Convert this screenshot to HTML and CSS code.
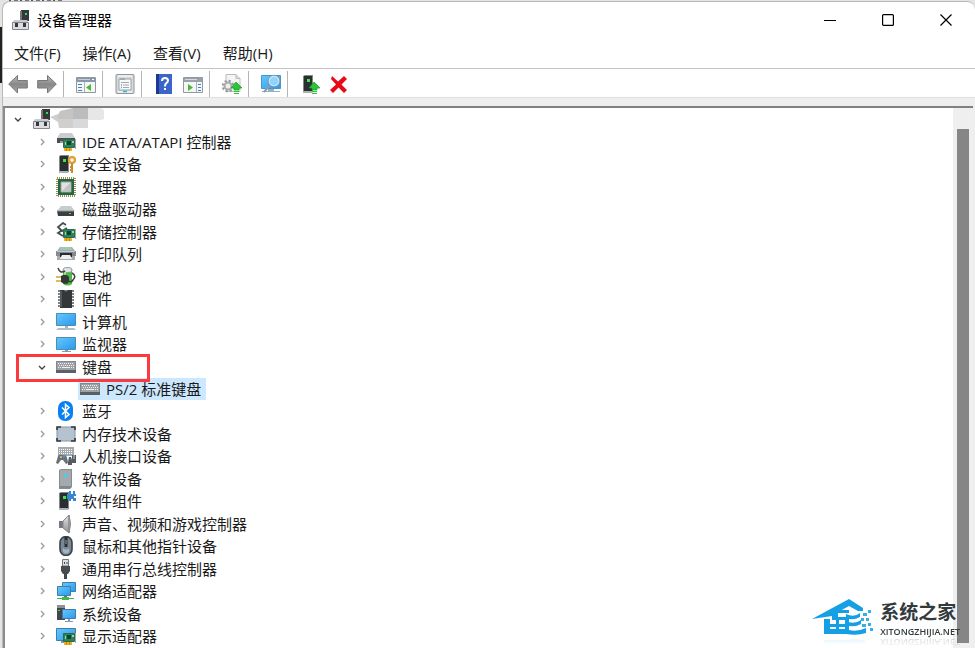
FILE: index.html
```html
<!DOCTYPE html>
<html lang="zh-CN">
<head>
  <meta charset="UTF-8">
  <title>设备管理器</title>
  <link rel="stylesheet" href="styles.css">
</head>
<body>
  <svg class="defs" aria-hidden="true">
    <defs>
      <linearGradient id="blue" x1="0" y1="0" x2="1" y2="1"><stop offset="0" stop-color="#66c8fb"/><stop offset="1" stop-color="#2a98ee"/></linearGradient>
      <linearGradient id="silver" x1="0" y1="0" x2="0" y2="1"><stop offset="0" stop-color="#e2e4e6"/><stop offset="1" stop-color="#8c9196"/></linearGradient>
      <linearGradient id="arrow" x1="0" y1="0" x2="0" y2="1"><stop offset="0" stop-color="#bbb"/><stop offset=".5" stop-color="#888"/><stop offset="1" stop-color="#aaa"/></linearGradient>
      <symbol id="computer" viewBox="0 0 20 20">
        <path d="M10 0h8v11h-8z" fill="#34383b"/><path d="M9 1h2v10H9z" fill="#777"/><path d="M14 3h2v2h-2z" fill="#35e04a"/>
        <path d="M3 10h13l2 3v6H1v-6z" fill="#c9cbd0"/><path d="M1.500 12.500h16v7h-16z" fill="#dcdde1" stroke="#85888d"/>
        <path d="M4 13h3v4H4zM12 13h3v4h-3z" fill="#36383c"/>
      </symbol>
      <symbol id="chip-board" viewBox="0 0 20 20">
        <path d="M7.500 7.500h11v8h-11z" fill="#28845a" stroke="#2b6a4c"/><path d="M11 9h4v4h-4z" fill="#163f30"/><path d="M16 9h2v2h-2zM9 10h1v3H9z" fill="#9ed4a8"/><path d="M19.500 7v10" stroke="#aaa"/>
        <path d="M8 16h8v3H8z" fill="#f2b11c"/><path d="M10.500 16v3M13.500 16v3" stroke="#c98a0a"/>
      </symbol>
      <symbol id="tower" viewBox="0 0 20 20">
        <path d="M3 2l2-1h8v17l-2 1H3z" fill="#83878a"/><path d="M4 2h8v16H4z" fill="#2b2e30"/><path d="M3 17h9v2H3z" fill="#aeb1b3"/><path d="M7 5h3v3H7z" fill="#38e943"/>
      </symbol>
      <symbol id="keyboard" viewBox="0 0 20 20">
        <path d="M0 4h20v12H0z" fill="#83888d"/><path d="M1 5h18v8H1z" fill="#9da2a7"/><path d="M0 13h20v3H0z" fill="#5b6066"/>
        <path d="M2 6.500h16M3 8.500h15M2 10.500h3M15 10.500h3" stroke="#eef0f1" stroke-dasharray="1 1"/><path d="M6 10.500h8" stroke="#eef0f1"/>
      </symbol>
      <symbol id="down" viewBox="0 0 16 16"><path d="M5 7l3 3 3-3" fill="none" stroke="#444" stroke-width="1.4"/></symbol>
      <symbol id="right" viewBox="0 0 16 16"><path d="M7 5l3 3-3 3" fill="none" stroke="#999" stroke-width="1.3"/></symbol>
      <symbol id="up-arrow" viewBox="0 0 20 20"><path d="M14 8l6 6h-3v2h-5v-2H9z" fill="#2cc536" stroke="#169b25" stroke-width=".7"/><path d="M12 17h5v1h-5zM12 19h5v1h-5z" fill="#2cc536"/></symbol>
    </defs>
  </svg>

  <div class="behind"></div>
  <div class="behind-title"></div>

  <main class="window">
    <header class="title-bar">
      <svg class="icon"><use href="#computer"/></svg>
      <h1>设备管理器</h1>
      <div class="window-controls">
        <button aria-label="最小化"><svg viewBox="0 0 12 12"><path d="M0 6.500h12"/></svg></button>
        <button aria-label="最大化"><svg viewBox="0 0 12 12"><rect x=".6" y=".6" width="10.8" height="10.8" rx="1"/></svg></button>
        <button aria-label="关闭"><svg viewBox="0 0 12 12"><path d="M.5.5l11 11M11.5.5l-11 11"/></svg></button>
      </div>
    </header>

    <nav class="menu-bar">
      <button>文件(F)</button>
      <button>操作(A)</button>
      <button>查看(V)</button>
      <button>帮助(H)</button>
    </nav>

    <div class="toolbar" role="toolbar">
      <button aria-label="后退"><svg class="icon" viewBox="0 0 20 20"><path d="M.7 10L9.5 1.5v5H19.3v7.5H9.5v5z" fill="url(#arrow)" stroke="#777"/></svg></button>
      <button aria-label="前进"><svg class="icon" viewBox="0 0 20 20"><path d="M19.3 10L10.5 1.5v5H.7v7.5h9.8v5z" fill="url(#arrow)" stroke="#777"/></svg></button>
      <span class="separator"></span>
      <button aria-label="显示/隐藏控制台树"><svg class="icon" viewBox="0 0 20 20"><path d="M.5 3.5h19v15H.5z" fill="#f4f6f8" stroke="#9299a0"/><path d="M1 4h18v4H1z" fill="#8798a8"/><path d="M2 5.500h12" stroke="#c4d0da"/><path d="M16 5h2v1h-2z" fill="#fff"/><path d="M8.500 8v10" stroke="#aab1b8"/><path d="M2 10.5h4M2 13.5h4M2 16.5h4" stroke="#4283be"/><path d="M15 10v7l-5-3.500z" fill="#49ba2d"/></svg></button>
      <span class="separator"></span>
      <button aria-label="属性"><svg class="icon" viewBox="0 0 20 20"><rect x="1" y=".5" width="18" height="19" rx="1" fill="#d7dadd" stroke="#8f9498"/><path d="M3 2h14M3 18h14" stroke="#fff"/><path d="M4 5h12v11H4z" fill="#fafafa" stroke="#9da2a6"/><path d="M5 4h5v2H5z" fill="#a1aab2"/><path d="M6 8.500h8M8 11h6M8 13.500h6" stroke="#a2a8ae"/><path d="M6 11h1M6 13.500h1M8 17.500h4" stroke="#29b9dc" stroke-width="1.5"/></svg></button>
      <span class="separator"></span>
      <button aria-label="帮助"><svg class="icon" viewBox="0 0 20 20"><path d="M2 0h16v20H2z" fill="#3c65cc"/><path d="M2 0h3v20H2z" fill="#1d3990"/><path d="M8 7q0-3 3-3t3 2.500q0 1.500-2 3-1 1-1 3" fill="none" stroke="#fff" stroke-width="2"/><path d="M10 14h2v2h-2z" fill="#fff"/></svg></button>
      <button aria-label="显示/隐藏操作窗格"><svg class="icon" viewBox="0 0 20 20"><path d="M.5 3.5h19v15H.5z" fill="#f4f6f8" stroke="#9299a0"/><path d="M1 4h18v4H1z" fill="#99a2aa"/><path d="M2 5.500h12" stroke="#d4dadf"/><path d="M13.500 8v10" stroke="#aab1b8"/><path d="M15 10.500h3M15 13.500h3M15 16.500h3" stroke="#4283be"/><path d="M5 10v7l5-3.500z" fill="#49ba2d"/></svg></button>
      <span class="separator"></span>
      <button aria-label="更新驱动程序"><svg class="icon" viewBox="0 0 20 20"><path d="M4 .5h10l4 4v13H4z" fill="#f5f5f5" stroke="#bbb"/><path d="M14 .5v4h4" fill="#ddd" stroke="#bbb"/><circle cx="6" cy="12" r="5.300" fill="none" stroke="#999" stroke-width="2" stroke-dasharray="2.200 1.960"/><circle cx="6" cy="12" r="3.500" fill="#eee" stroke="#aaa" stroke-width="2"/><use href="#up-arrow" width="20" height="20"/></svg></button>
      <span class="separator"></span>
      <button aria-label="扫描检测硬件改动"><svg class="icon" viewBox="0 0 20 20"><path d="M.5 1.500h19v13H.5z" fill="url(#blue)" stroke="#4996c4"/><path d="M7 15h6v2H7zM1 17h18v1H1z" fill="#96b2c3"/><circle cx="13" cy="7" r="5" fill="#a3dcff" fill-opacity=".8" stroke="#d8e2e8" stroke-width="1.500"/><circle cx="13" cy="7" r="5.800" fill="none" stroke="#66889b" stroke-width=".6"/><path d="M9 11l-6 7" stroke="#8b9dac" stroke-width="2"/></svg></button>
      <span class="separator"></span>
      <button aria-label="启用设备"><svg class="icon" viewBox="0 0 20 20"><use href="#tower" width="20" height="20"/><use href="#up-arrow" width="20" height="20"/></svg></button>
      <button aria-label="卸载设备"><svg class="icon" viewBox="0 0 20 20"><path d="M3 2l6 5.500L15 2l3 3-5.500 5.500L18 16l-3 3-5.500-5.500L4 19l-3-3 6-5.500L2 5z" fill="#e50b19"/></svg></button>
    </div>

    <section class="content">
      <div class="tree">
        <div class="row">
          <button class="expander" aria-label="折叠"><svg><use href="#down"/></svg></button>
          <span class="label"><svg class="icon"><use href="#computer"/></svg>
            <svg class="redacted" viewBox="0 0 56 22"><path d="M0 9l8-3 4-3h11v17H9L8 14z" fill="#d0cfcd"/><path d="M10 3l13-3v11H7z" fill="#c5c4c3"/><path d="M23 0h15v11H23z" fill="#bbbcbe"/><path d="M23 11h15v9H23z" fill="#d9d9da"/><path d="M38 0h12q4 0 4 4v6q0 2-5 2H38z" fill="#e7e7e7"/></svg>
          </span>
        </div>
        <ul>
          <li><div class="row"><button class="expander" aria-label="展开"><svg><use href="#right"/></svg></button><span class="label"><svg class="icon" viewBox="0 0 20 20"><path d="M4 1h12l3 5H1z" fill="#cbced0"/><path d="M1 6h18v5H1z" fill="#4b5054"/><path d="M4 9h4v2H4z" fill="#999"/><use href="#chip-board" width="20" height="20"/></svg>IDE ATA/ATAPI 控制器</span></div></li>
          <li><div class="row"><button class="expander" aria-label="展开"><svg><use href="#right"/></svg></button><span class="label"><svg class="icon" viewBox="0 0 20 20"><use href="#tower" width="20" height="20"/><circle cx="16" cy="6" r="3" fill="none" stroke="#dea437" stroke-width="2.500"/><path d="M16 9v10M16 16h-2M16 13h-2" stroke="#cd8c22" stroke-width="2"/></svg>安全设备</span></div></li>
          <li><div class="row"><button class="expander" aria-label="展开"><svg><use href="#right"/></svg></button><span class="label"><svg class="icon" viewBox="0 0 20 20"><rect x="1" y="1" width="18" height="18" fill="none" stroke="#99924c" stroke-width="2" stroke-dasharray="1 1"/><path d="M2 2h16v16H2z" fill="#276548"/><path d="M5 5h10v10H5z" fill="#e1e2e1" stroke="#9ba99e"/><path d="M14 6v8H6" fill="#c0c5c2"/></svg>处理器</span></div></li>
          <li><div class="row"><button class="expander" aria-label="展开"><svg><use href="#right"/></svg></button><span class="label"><svg class="icon" viewBox="0 0 20 20"><path d="M5 7h10l4 5H1z" fill="#c9cccf"/><path d="M1 12h17v5H2z" fill="#3b3e40"/><path d="M1 12h17" stroke="#909599"/><path d="M13 14h2v1h-2z" fill="#43e44b"/></svg>磁盘驱动器</span></div></li>
          <li><div class="row"><button class="expander" aria-label="展开"><svg><use href="#right"/></svg></button><span class="label"><svg class="icon" viewBox="0 0 20 20"><path d="M10 3L7 1 2 5l4 4 5-3M5 9l-3 2 5 3" fill="none" stroke="#494d4f" stroke-width="1.800"/><path d="M7 4l3 2" stroke="#ccc"/><use href="#chip-board" width="20" height="20"/></svg>存储控制器</span></div></li>
          <li><div class="row"><button class="expander" aria-label="展开"><svg><use href="#right"/></svg></button><span class="label"><svg class="icon" viewBox="0 0 20 20"><path d="M4 3h12l3 4v9H1V7z" fill="#a7acb0"/><path d="M5 3h10l1 3H4z" fill="#9ccabb"/><path d="M0 7h20v5H0z" fill="#848a8f"/><path d="M1 7h18v1H1z" fill="#c5c9cc"/><path d="M4 9h12v4H4z" fill="#2a2d30"/><path d="M6 11h8l2 4H4z" fill="#eceeef"/></svg>打印队列</span></div></li>
          <li><div class="row"><button class="expander" aria-label="展开"><svg><use href="#right"/></svg></button><span class="label"><svg class="icon" viewBox="0 0 20 20"><path d="M7 2q5-3 9 0v15q-4 3-9 0z" fill="#4db943"/><ellipse cx="11.500" cy="3" rx="4.500" ry="2.500" fill="#e1e4e8" stroke="#8f959e"/><path d="M9 5v10" stroke="#a1ed88" stroke-width="2"/><path d="M2 1q2 6 7 3M16 6q5 3 1 7-2 3-4 1" fill="none" stroke="#3a3d3e" stroke-width="1.500"/><path d="M5 9q5-3 8 1v5q-3 4-8 0z" fill="#34373a"/><path d="M0 10h5M0 14h5" stroke="#d3a62a" stroke-width="1.600"/></svg>电池</span></div></li>
          <li><div class="row"><button class="expander" aria-label="展开"><svg><use href="#right"/></svg></button><span class="label"><svg class="icon" viewBox="0 0 20 20"><path d="M2 2h16M2 5h16M2 8h16M2 11h16M2 14h16M2 17h16" stroke="#55595c" stroke-width="1.500"/><path d="M4 1h4q2 3 4 0h4v18H4z" fill="#34373a"/><path d="M5 2v16" stroke="#74787b"/></svg>固件</span></div></li>
          <li><div class="row"><button class="expander" aria-label="展开"><svg><use href="#right"/></svg></button><span class="label"><svg class="icon" viewBox="0 0 20 20"><path d="M.5 1.500h19v12H.5z" fill="url(#blue)" stroke="#4b8eb5"/><path d="M9 14h3v2H9z" fill="#a8b4bc"/><path d="M2 16h16l2 2H0z" fill="#b4bec5"/></svg>计算机</span></div></li>
          <li><div class="row"><button class="expander" aria-label="展开"><svg><use href="#right"/></svg></button><span class="label"><svg class="icon" viewBox="0 0 20 20"><path d="M.5 3.500h19v12H.5z" fill="url(#blue)" stroke="#4b8eb5"/><path d="M9 16h3v1H9zM6 17h9v1H6z" fill="#829dad"/></svg>监视器</span></div></li>
          <li class="marked">
            <div class="row"><button class="expander" aria-label="折叠"><svg><use href="#down"/></svg></button><span class="label"><svg class="icon"><use href="#keyboard"/></svg>键盘</span></div>
            <ul>
              <li><div class="row"><span class="expander"></span><span class="label selected"><svg class="icon"><use href="#keyboard"/></svg>PS/2 标准键盘</span></div></li>
            </ul>
          </li>
          <li><div class="row"><button class="expander" aria-label="展开"><svg><use href="#right"/></svg></button><span class="label"><svg class="icon" viewBox="0 0 20 20"><rect x="2" y="0" width="15" height="20" rx="7" fill="#0a80f5"/><path d="M6 6.500l7 7-3.500 3v-13l3.500 3-7 7" fill="none" stroke="#fff" stroke-width="1.500"/></svg>蓝牙</span></div></li>
          <li><div class="row"><button class="expander" aria-label="展开"><svg><use href="#right"/></svg></button><span class="label"><svg class="icon" viewBox="0 0 20 20"><rect x="1" y="3" width="18" height="14" rx="1" fill="#b4c3cf" stroke="#8496a3"/><path d="M1 6V3h4M15 3h4v3M19 14v3h-4M5 17H1v-3" fill="none" stroke="#33393d" stroke-width="1.600"/></svg>内存技术设备</span></div></li>
          <li><div class="row"><button class="expander" aria-label="展开"><svg><use href="#right"/></svg></button><span class="label"><svg class="icon" viewBox="0 0 20 20"><path d="M2 1h16v9H2z" fill="#a7abae"/><path d="M3 3.500h14M3 5.500h14M3 7.500h14" stroke="#fff" stroke-dasharray="1 1"/><path d="M0 17l2-7q1-2 4-1h3q2 0 3 8l-2 1-3-4H5l-3 4z" fill="#697077"/><path d="M4 10h2v2H4z" fill="#f0a830"/><circle cx="8" cy="10" r="1.500" fill="#3e9de2"/><path d="M12 16l1-5h2l1 3V9h4v8h-4v2h-4z" fill="#555c63"/><path d="M17 9h2v4h-2z" fill="#8b9299"/></svg>人机接口设备</span></div></li>
          <li><div class="row"><button class="expander" aria-label="展开"><svg><use href="#right"/></svg></button><span class="label"><svg class="icon" viewBox="0 0 20 20"><path d="M3 1l2-1h11v18l-2 2H3z" fill="#868c92"/><path d="M4 1h11v17H4z" fill="#a4a9ae"/><path d="M4 17h11v2H4z" fill="#81878d"/><circle cx="9.500" cy="6.500" r="1.800" fill="#38d7ec"/></svg>软件设备</span></div></li>
          <li><div class="row"><button class="expander" aria-label="展开"><svg><use href="#right"/></svg></button><span class="label"><svg class="icon" viewBox="0 0 20 20"><use href="#tower" width="20" height="20"/><path d="M11 3h2V0h2v3h2V0h2v3h1v2h-2v2h2v3h-3V8h-2v2h-2V8h-2z" fill="#3488d1"/></svg>软件组件</span></div></li>
          <li><div class="row"><button class="expander" aria-label="展开"><svg><use href="#right"/></svg></button><span class="label"><svg class="icon" viewBox="0 0 20 20"><path d="M3 7h4v7H3z" fill="#73797e"/><path d="M7 7l6-6v18l-6-5z" fill="url(#silver)" stroke="#888"/><path d="M13 1q3 9 0 18z" fill="#aaafb4" stroke="#888"/></svg>声音、视频和游戏控制器</span></div></li>
          <li><div class="row"><button class="expander" aria-label="展开"><svg><use href="#right"/></svg></button><span class="label"><svg class="icon" viewBox="0 0 20 20"><rect x="4" y=".5" width="12" height="19" rx="6" fill="#798895" stroke="#3c4146" stroke-width="1.600"/><path d="M10 1v10" stroke="#292d30" stroke-width="3"/><path d="M10 4v4" stroke="#9ba7b2"/><path d="M7 12q3 3 6 0v4q-3 3-6 0z" fill="#a6b4c0"/></svg>鼠标和其他指针设备</span></div></li>
          <li><div class="row"><button class="expander" aria-label="展开"><svg><use href="#right"/></svg></button><span class="label"><svg class="icon" viewBox="0 0 20 20"><path d="M6.500 .5h6V7h-6z" fill="#dedfe0" stroke="#75797c"/><path d="M8 3h1v2H8zM10.500 3h1v2h-1z" fill="#444"/><path d="M5 7h9v5l-2 3H7l-2-3z" fill="#484c4f"/><path d="M9.500 14v6" stroke="#44484b" stroke-width="3"/></svg>通用串行总线控制器</span></div></li>
          <li><div class="row"><button class="expander" aria-label="展开"><svg><use href="#right"/></svg></button><span class="label"><svg class="icon" viewBox="0 0 20 20"><path d="M6.500 1.500h13v9h-13z" fill="url(#blue)" stroke="#407da8"/><path d="M1.500 5.500h13v9h-13z" fill="url(#blue)" stroke="#407da8"/><path d="M8 15h3v1H8z" fill="#65737b"/><path d="M1 17h5v-1h7v1h5v1h-5v1H6v-1H1z" fill="#3fba4f"/></svg>网络适配器</span></div></li>
          <li><div class="row"><button class="expander" aria-label="展开"><svg><use href="#right"/></svg></button><span class="label"><svg class="icon" viewBox="0 0 20 20"><path d="M1 1h8v15H1z" fill="#42474b"/><path d="M1 1h8v3H1z" fill="#8d9296"/><path d="M2 6h2v1H2z" fill="#37df50"/><path d="M6.500 5.500h13v9h-13z" fill="url(#blue)" stroke="#407da8"/><path d="M12 15h2v2h-2zM9 17h8v1H9z" fill="#819cae"/></svg>系统设备</span></div></li>
          <li><div class="row"><button class="expander" aria-label="展开"><svg><use href="#right"/></svg></button><span class="label"><svg class="icon" viewBox="0 0 20 20"><path d="M.5 2.500h19v12H.5z" fill="url(#blue)" stroke="#407da8"/><path d="M5 15h5v2H5z" fill="#819cae"/><use href="#chip-board" width="20" height="20"/></svg>显示适配器</span></div></li>
        </ul>
      </div>
      <div class="scrollbar"><div class="thumb"></div></div>
    </section>
  </main>

  <div class="watermark">
    <svg class="logo" viewBox="0 0 62 38" aria-hidden="true">
      <path d="M0 20L37 0l14 9v3h-5l-9-5-11 6v7h-6v-3z" fill="#15a0e5"/>
      <path d="M12 20h6v10h15v-9H20v-3h17v17H12z" fill="#15a0e5"/>
      <path d="M22 11h15v3H22zM18 25h15v3H18zM24 20h3v13h-3z" fill="#15a0e5"/>
      <path d="M34 15q8 4 14-1v4q-7 4-14 1zM34 22q8 4 15-1v4q-7 4-15 1zM34 30q9 4 20-1v5q-9 3-20 1z" fill="#15a0e5"/>
      <path d="M51 14h4v3h-4zM56 11h3v3h-3zM49 19h3v3h-3zM54 19h3v3h-3zM50 25h4v3h-4zM56 24h3v3h-3zM58 29h3v3h-3z" fill="#35aee9"/>
    </svg>
    <div class="watermark-text">
      <strong>系统之家</strong>
      <span>XITONGZHIJIA.NET</span>
    </div>
  </div>
</body>
</html>
```
FILE: styles.css
```css
* {
  box-sizing: border-box;
}

body {
  margin: 0;
  height: 100vh;
  padding: 1px 0 0 2px;
  overflow: hidden;
  background: #e4e4e4;
  color: #1a1a1a;
  font-family: "Open Sans", "Noto Sans CJK SC", sans-serif;
  font-size: 15px;
  line-height: 22px;
}

button {
  padding: 0;
  border: none;
  background: none;
  color: inherit;
  font: inherit;
}

ul {
  margin: 0;
  padding: 0;
  list-style: none;
}

.defs {
  position: absolute;
  width: 0;
  height: 0;
}

/* slivers of the window underneath */
.behind {
  position: absolute;
  left: 0;
  top: 27px;
  width: 2px;
  height: 56px;
  background: #222;
}

.behind-title {
  position: absolute;
  left: 9px;
  top: 0;
  width: 55px;
  height: 1px;
  background: repeating-linear-gradient(90deg, #555 0 2px, #e4e4e4 2px 5px, #777 5px 9px, #e4e4e4 9px 11px);
}

.icon {
  flex: none;
  width: 20px;
  height: 20px;
}

.window {
  display: flex;
  flex-direction: column;
  height: 100%;
  border: 1px solid #b9b9b9;
  border-right: none;
  border-bottom: none;
  border-radius: 8px 8px 0 0;
  overflow: hidden;
  background: #fff;
}

.title-bar {
  display: flex;
  align-items: center;
  height: 36px;
  padding-left: 8px;
}

.title-bar h1 {
  margin: 0 0 0 6px;
  color: #000;
  font-size: 15px;
  font-weight: 400;
}

.window-controls {
  display: flex;
  margin-left: auto;
}

.window-controls button {
  display: grid;
  place-items: center;
  width: 58px;
  height: 36px;
}

.window-controls svg {
  width: 12px;
  height: 12px;
  fill: none;
  stroke: #000;
  stroke-width: 1.2;
}

.menu-bar {
  display: flex;
  align-items: center;
  gap: 22px;
  height: 30px;
  padding-left: 11px;
}

.toolbar {
  display: flex;
  align-items: center;
  height: 30px;
  padding-top: 1px;
  border-top: 1px solid #c4c4c4;
  border-bottom: 1px solid #e0e0e0;
}

.toolbar button {
  display: grid;
  place-items: center;
  width: 29px;
  height: 26px;
}

.separator {
  width: 1px;
  height: 26px;
  margin: 0 7px 0 2px;
  background: #b5b5b5;
}

.content {
  display: flex;
  flex: 1;
  min-height: 0;
  margin: 8px 2px 0 0;
  border-top: 2px solid #808080;
  border-left: 2px solid #8d8d8d;
  outline: 8px solid #eee;
}

.tree {
  flex: 1;
  padding-left: 5px;
  overflow: hidden;
}

.row {
  display: flex;
  align-items: center;
  height: 22px;
}

li:nth-child(odd) > .row {
  height: 23px;
}

li li:nth-child(odd) > .row {
  height: 22px;
}

li .row {
  padding-left: 24px;
}

li li .row {
  padding-left: 48px;
}

.expander {
  display: flex;
  flex: none;
  width: 16px;
  height: 16px;
  margin-right: 4px;
}

.expander svg {
  width: 16px;
  height: 16px;
}

.label {
  display: flex;
  align-items: center;
  gap: 6px;
  height: 22px;
  padding: 0 5px 0 2px;
  white-space: nowrap;
}

.selected {
  background: #cce8ff;
}

.redacted {
  width: 56px;
  height: 22px;
  margin-left: -8px;
}

.marked {
  position: relative;
}

/* highlight frame around the keyboard category */
.marked::after {
  content: "";
  position: absolute;
  top: -1px;
  left: 6px;
  box-sizing: border-box;
  width: 134px;
  height: 28px;
  border: 3px solid #fb3a3c;
}

.scrollbar {
  width: 20px;
  padding: 21px 4px 5px;
  background: #efefef;
}

.thumb {
  height: 100%;
  background: #868686;
}

.watermark {
  position: absolute;
  right: 15px;
  bottom: 10px;
  display: flex;
  align-items: center;
  gap: 6px;
}

.logo {
  width: 62px;
  height: 38px;
  -webkit-box-reflect: below 0 linear-gradient(transparent 80%, rgba(0, 0, 0, 0.15));
}

.watermark-text {
  display: flex;
  flex-direction: column;
  color: #333a3d;
}

.watermark-text strong {
  font-size: 19px;
  line-height: 28px;
}

.watermark-text span {
  font-size: 9px;
  font-weight: 600;
  line-height: 12px;
  -webkit-box-reflect: below -2px linear-gradient(transparent, rgba(0, 0, 0, 0.25));
}
```
